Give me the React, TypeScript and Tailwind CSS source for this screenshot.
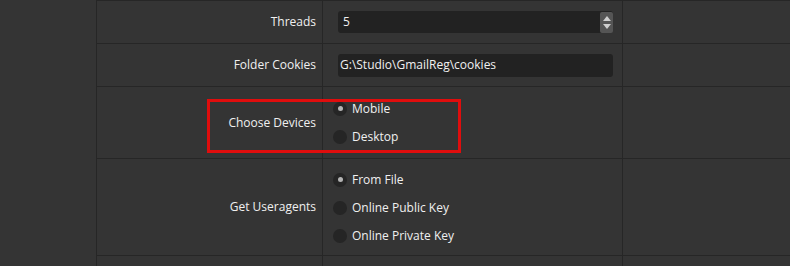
import React from 'react'

const font = { fontFamily: '"Open Sans", "Noto Sans", sans-serif' }

function Radio({ label, checked }: { label: string; checked?: boolean }) {
  return (
    <div className="flex items-center h-[28px] gap-[5px]">
      <span className="w-[14px] h-[14px] rounded-full bg-[#252525] flex items-center justify-center">
        {checked && <span className="w-[5px] h-[5px] rounded-full bg-[#b4b4b4]" />}
      </span>
      <span className="text-[12px] text-[#f0f0f0]">{label}</span>
    </div>
  )
}

function Row({
  label,
  height,
  children,
}: {
  label: string
  height: string
  children: React.ReactNode
}) {
  return (
    <div className={`grid grid-cols-[226px_300px_1fr] shrink-0 border-b border-[#262626] ${height}`}>
      <div className="flex items-center justify-end pr-[6px] border-r border-[#262626] text-[12px] text-[#f0f0f0]">
        {label}
      </div>
      <div className="flex items-center pl-[15px] border-r border-[#262626]">{children}</div>
      <div />
    </div>
  )
}

export default function App() {
  return (
    <div className="w-[790px] h-[266px] bg-[#343434] flex overflow-hidden" style={font}>
      <div className="w-[97px] border-r border-[#262626] shrink-0" />
      <div className="flex-1 flex flex-col border-t border-[#262626]">
        <Row label="Threads" height="h-[43px]">
          <div className="w-[275px] h-[22px] bg-[#222222] rounded-[3px] flex items-center justify-between pl-[5px]">
            <span className="text-[12px] text-[#f0f0f0]">5</span>
            <span className="w-[13px] h-[21px] bg-[#555555] rounded-[2px] flex flex-col items-center justify-center gap-[3px]">
              <svg width="8" height="5" viewBox="0 0 8 5">
                <path d="M0 5 L4 0 L8 5 Z" fill="#cfcfcf" />
              </svg>
              <svg width="8" height="5" viewBox="0 0 8 5">
                <path d="M0 0 L4 5 L8 0 Z" fill="#cfcfcf" />
              </svg>
            </span>
          </div>
        </Row>
        <Row label="Folder Cookies" height="h-[43px]">
          <div className="w-[275px] h-[23px] bg-[#222222] rounded-[3px] flex items-center pl-[2px]">
            <span className="text-[12px] text-[#f0f0f0]">G:\Studio\GmailReg\cookies</span>
          </div>
        </Row>
        <div className="relative shrink-0">
          <Row label="Choose Devices" height="h-[72px]">
            <div className="flex flex-col -ml-[5px]">
              <Radio label="Mobile" checked />
              <Radio label="Desktop" />
            </div>
          </Row>
          <div className="absolute left-[110px] top-[12px] w-[254px] h-[54px] border-[3px] border-[#e00d0d] pointer-events-none" />
        </div>
        <Row label="Get Useragents" height="h-[97px]">
          <div className="flex flex-col -ml-[5px] pt-[1px]">
            <Radio label="From File" checked />
            <Radio label="Online Public Key" />
            <Radio label="Online Private Key" />
          </div>
        </Row>
        <Row label="" height="h-[30px]">
          <div />
        </Row>
      </div>
    </div>
  )
}
